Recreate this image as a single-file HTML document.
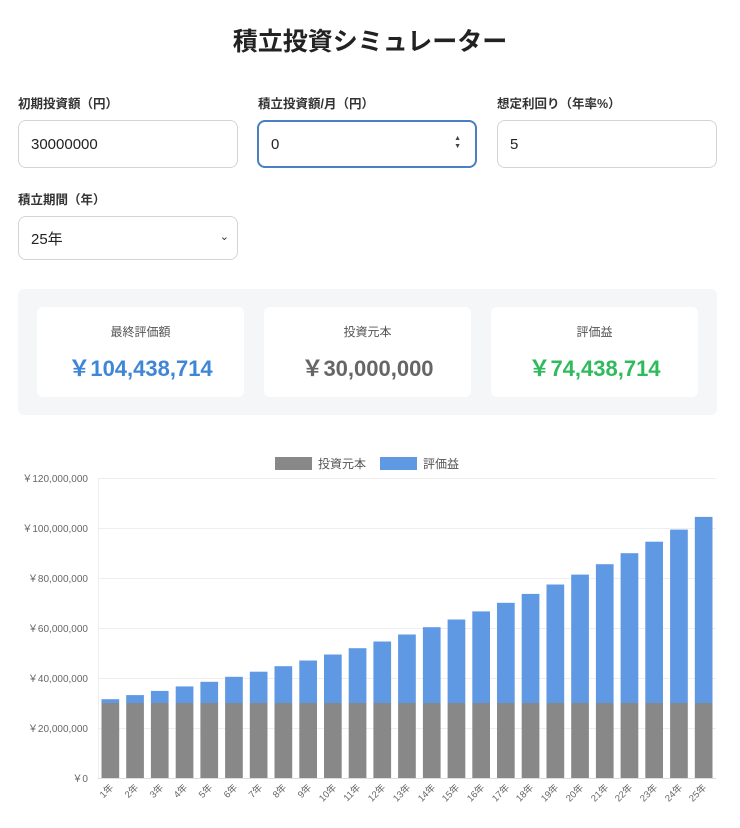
<!DOCTYPE html>
<html><head><meta charset="utf-8"><style>
body{margin:0;background:#fff;font-family:"Liberation Sans","Noto Sans CJK JP",sans-serif;color:#222;width:740px;height:828px;position:relative;overflow:hidden}
.a{position:absolute}
h1{position:absolute;left:0;width:740px;top:22px;margin:0;text-align:center;font-size:25px;font-weight:bold;color:#222}
.lbl{position:absolute;font-size:12.5px;font-weight:bold;color:#333}
.inp{position:absolute;box-sizing:border-box;border:1.5px solid #d4d4d4;border-radius:8px;background:#fff;font-size:15px;color:#222;padding-left:12px;display:flex;align-items:center}
.sum{position:absolute;left:18px;top:289px;width:699px;height:126px;background:#f5f6f8;border-radius:6px}
.card{position:absolute;top:307px;width:207px;height:90px;background:#fff;border-radius:6px;text-align:center}
.card .t{position:absolute;top:16px;width:100%;font-size:12px;color:#555}
.card .v{position:absolute;top:44px;width:100%;font-size:22px;font-weight:bold}
</style></head><body>
<h1>積立投資シミュレーター</h1>
<div class="lbl" style="left:18px;top:93px">初期投資額（円）</div>
<div class="lbl" style="left:258px;top:93px">積立投資額/月（円）</div>
<div class="lbl" style="left:497px;top:93px">想定利回り（年率%）</div>
<div class="inp" style="left:18px;top:120px;width:220px;height:48px">30000000</div>
<div class="inp" style="left:257px;top:120px;width:220px;height:48px;border:2px solid #4a7fc1">0<span class="a" style="right:14px;top:13px;font-size:7px;line-height:8px;color:#444">▲<br>▼</span></div>
<div class="inp" style="left:497px;top:120px;width:220px;height:48px">5</div>
<div class="lbl" style="left:18px;top:189px">積立期間（年）</div>
<div class="inp" style="left:18px;top:216px;width:220px;height:44px">25年<span class="a" style="right:8px;top:13px;font-size:11px;color:#333">⌄</span></div>
<div class="sum"></div>
<div class="card" style="left:37px"><div class="t">最終評価額</div><div class="v" style="color:#3e86d6">￥104,438,714</div></div>
<div class="card" style="left:264px"><div class="t">投資元本</div><div class="v" style="color:#666">￥30,000,000</div></div>
<div class="card" style="left:491px"><div class="t">評価益</div><div class="v" style="color:#2fbb5c">￥74,438,714</div></div>
<svg class="a" style="left:0;top:0" width="740" height="828" font-family="Liberation Sans, Noto Sans CJK JP, sans-serif">
<rect x="275" y="457" width="37" height="13" fill="#888"/><text x="318" y="468" font-size="12" fill="#555">投資元本</text>
<rect x="380" y="457" width="37" height="13" fill="#5f99e3"/><text x="423" y="468" font-size="12" fill="#555">評価益</text>
<g stroke="#eee" stroke-width="1">
<line x1="98" y1="478.5" x2="716" y2="478.5"/><line x1="98" y1="528.5" x2="716" y2="528.5"/><line x1="98" y1="578.5" x2="716" y2="578.5"/><line x1="98" y1="628.5" x2="716" y2="628.5"/><line x1="98" y1="678.5" x2="716" y2="678.5"/><line x1="98" y1="728.5" x2="716" y2="728.5"/>
<line x1="98.5" y1="478" x2="98.5" y2="778"/></g>
<line x1="98" y1="778.5" x2="716" y2="778.5" stroke="#ddd"/>
<g font-size="10" fill="#666" text-anchor="end">
<text x="88" y="482">￥120,000,000</text><text x="88" y="532">￥100,000,000</text><text x="88" y="582">￥80,000,000</text><text x="88" y="632">￥60,000,000</text><text x="88" y="682">￥40,000,000</text><text x="88" y="732">￥20,000,000</text><text x="88" y="782">￥0</text></g>
<g fill="#5f99e3">
<rect x="101.5" y="699.2" width="17.7" height="3.8"/><rect x="126.2" y="695.1" width="17.7" height="7.9"/><rect x="150.9" y="690.9" width="17.7" height="12.1"/><rect x="175.7" y="686.4" width="17.7" height="16.6"/><rect x="200.4" y="681.8" width="17.7" height="21.2"/><rect x="225.1" y="676.8" width="17.7" height="26.2"/><rect x="249.8" y="671.7" width="17.7" height="31.3"/><rect x="274.5" y="666.2" width="17.7" height="36.8"/><rect x="299.3" y="660.5" width="17.7" height="42.5"/><rect x="324" y="654.5" width="17.7" height="48.5"/><rect x="348.7" y="648.2" width="17.7" height="54.8"/><rect x="373.4" y="641.5" width="17.7" height="61.5"/><rect x="398.1" y="634.5" width="17.7" height="68.5"/><rect x="422.9" y="627.2" width="17.7" height="75.8"/><rect x="447.6" y="619.5" width="17.7" height="83.5"/><rect x="472.3" y="611.4" width="17.7" height="91.6"/><rect x="497" y="602.8" width="17.7" height="100.2"/><rect x="521.7" y="593.9" width="17.7" height="109.1"/><rect x="546.5" y="584.5" width="17.7" height="118.5"/><rect x="571.2" y="574.6" width="17.7" height="128.4"/><rect x="595.9" y="564.2" width="17.7" height="138.8"/><rect x="620.6" y="553.2" width="17.7" height="149.8"/><rect x="645.3" y="541.7" width="17.7" height="161.3"/><rect x="670.1" y="529.6" width="17.7" height="173.4"/><rect x="694.8" y="516.9" width="17.7" height="186.1"/></g>
<g fill="#888">
<rect x="101.5" y="703" width="17.7" height="75"/><rect x="126.2" y="703" width="17.7" height="75"/><rect x="150.9" y="703" width="17.7" height="75"/><rect x="175.7" y="703" width="17.7" height="75"/><rect x="200.4" y="703" width="17.7" height="75"/><rect x="225.1" y="703" width="17.7" height="75"/><rect x="249.8" y="703" width="17.7" height="75"/><rect x="274.5" y="703" width="17.7" height="75"/><rect x="299.3" y="703" width="17.7" height="75"/><rect x="324" y="703" width="17.7" height="75"/><rect x="348.7" y="703" width="17.7" height="75"/><rect x="373.4" y="703" width="17.7" height="75"/><rect x="398.1" y="703" width="17.7" height="75"/><rect x="422.9" y="703" width="17.7" height="75"/><rect x="447.6" y="703" width="17.7" height="75"/><rect x="472.3" y="703" width="17.7" height="75"/><rect x="497" y="703" width="17.7" height="75"/><rect x="521.7" y="703" width="17.7" height="75"/><rect x="546.5" y="703" width="17.7" height="75"/><rect x="571.2" y="703" width="17.7" height="75"/><rect x="595.9" y="703" width="17.7" height="75"/><rect x="620.6" y="703" width="17.7" height="75"/><rect x="645.3" y="703" width="17.7" height="75"/><rect x="670.1" y="703" width="17.7" height="75"/><rect x="694.8" y="703" width="17.7" height="75"/></g>
<g font-size="9.5" fill="#666" text-anchor="end">
<text transform="translate(114,788) rotate(-45)">1年</text><text transform="translate(139,788) rotate(-45)">2年</text><text transform="translate(164,788) rotate(-45)">3年</text><text transform="translate(188,788) rotate(-45)">4年</text><text transform="translate(213,788) rotate(-45)">5年</text><text transform="translate(238,788) rotate(-45)">6年</text><text transform="translate(263,788) rotate(-45)">7年</text><text transform="translate(287,788) rotate(-45)">8年</text><text transform="translate(312,788) rotate(-45)">9年</text><text transform="translate(337,788) rotate(-45)">10年</text><text transform="translate(361,788) rotate(-45)">11年</text><text transform="translate(386,788) rotate(-45)">12年</text><text transform="translate(411,788) rotate(-45)">13年</text><text transform="translate(436,788) rotate(-45)">14年</text><text transform="translate(460,788) rotate(-45)">15年</text><text transform="translate(485,788) rotate(-45)">16年</text><text transform="translate(510,788) rotate(-45)">17年</text><text transform="translate(534,788) rotate(-45)">18年</text><text transform="translate(559,788) rotate(-45)">19年</text><text transform="translate(584,788) rotate(-45)">20年</text><text transform="translate(609,788) rotate(-45)">21年</text><text transform="translate(633,788) rotate(-45)">22年</text><text transform="translate(658,788) rotate(-45)">23年</text><text transform="translate(683,788) rotate(-45)">24年</text><text transform="translate(707,788) rotate(-45)">25年</text></g>
</svg>
</body></html>
